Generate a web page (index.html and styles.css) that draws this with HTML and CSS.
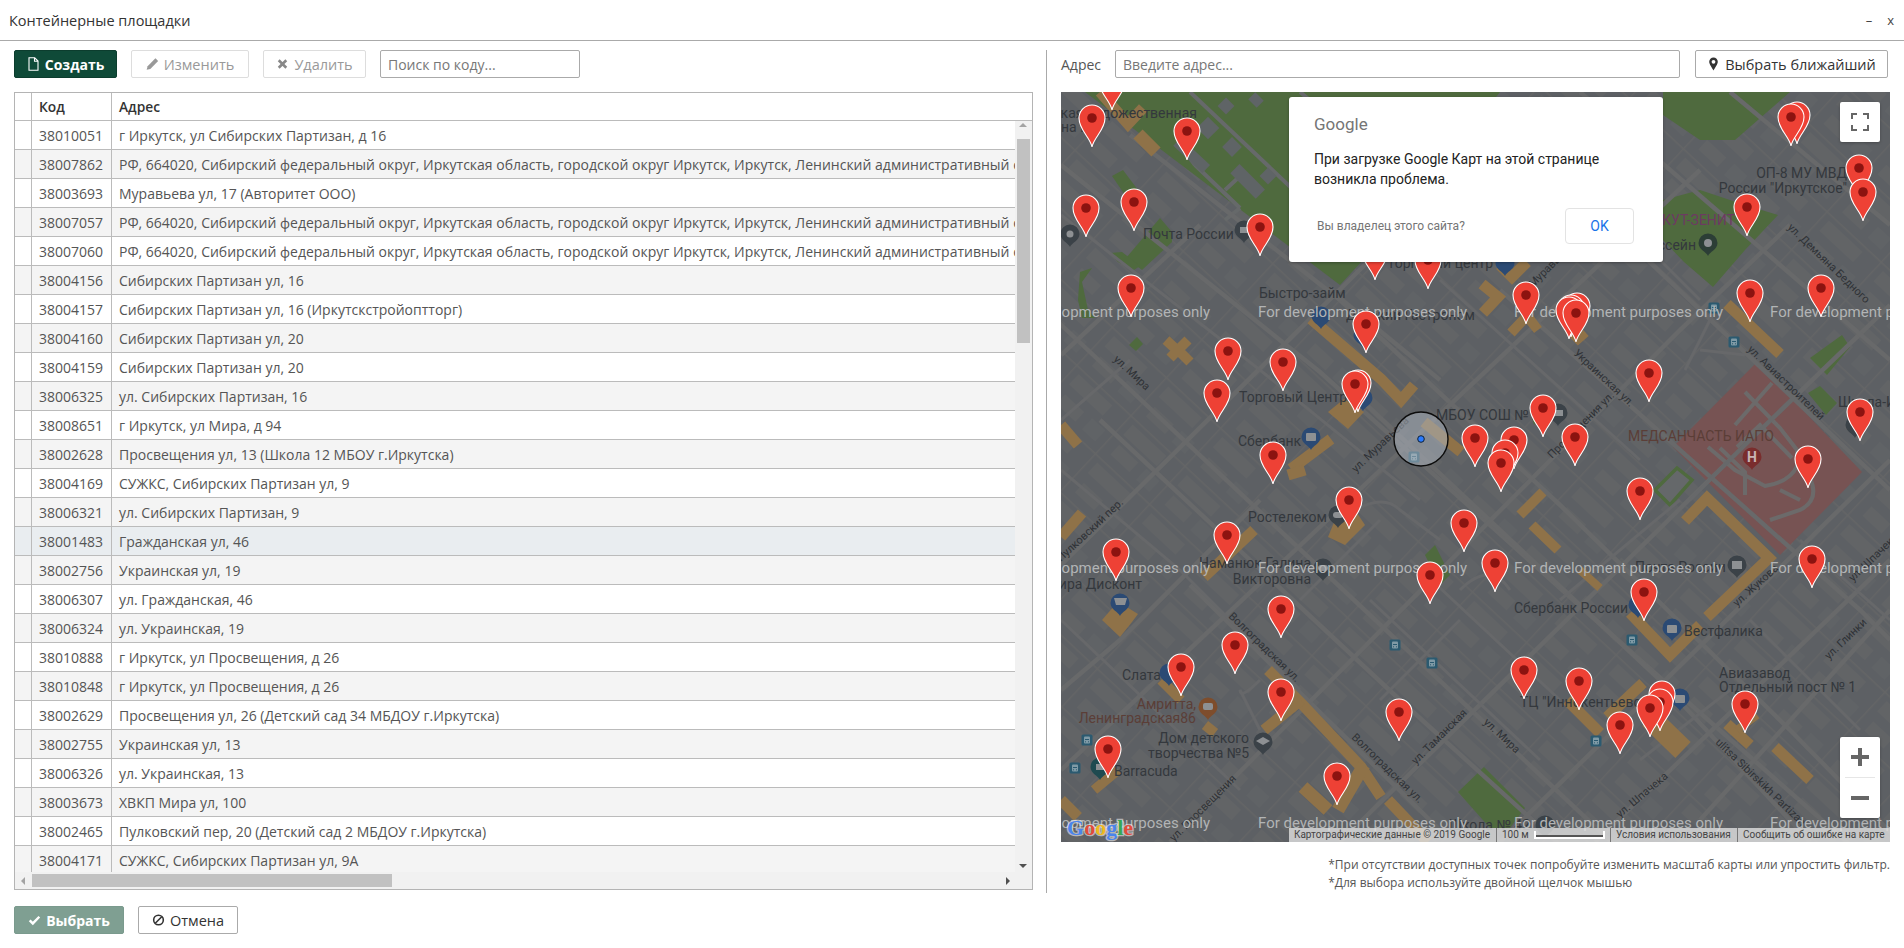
FILE: index.html
```html
<!DOCTYPE html>
<html lang="ru">
<head>
<meta charset="utf-8">
<title>Контейнерные площадки</title>
<link rel="stylesheet" href="styles.css">
</head>
<body>
<div class="window">
  <header class="titlebar">
    <span class="title">Контейнерные площадки</span>
    <span class="winctl"><span class="wmin">–</span><span class="wclose">x</span></span>
  </header>
  <div class="content">
    <section class="left">
      <div class="toolbar">
        <button class="btn btn-primary btn-create"><svg class="ico" viewBox="0 0 12 14"><path class="ico-line-w" d="M1.5.8h5.7l3.3 3.3v9.1h-9zM7 .8v3.5h3.5"/></svg>Создать</button>
        <button class="btn btn-disabled btn-edit"><svg class="ico" viewBox="0 0 12 12"><path class="ico-fill" d="M8.7.8l2.5 2.5-7.2 7.2-3.4.9.9-3.4z"/></svg>Изменить</button>
        <button class="btn btn-disabled btn-del"><svg class="ico" viewBox="0 0 12 12"><path class="ico-x" d="M2.5 2.5l7 7M9.5 2.5l-7 7"/></svg>Удалить</button>
        <input class="field search" placeholder="Поиск по коду...">
      </div>
      <div class="grid">
        <div class="row head"><div class="c0"></div><div class="c1">Код</div><div class="c2">Адрес</div></div>
        <div class="body">
          <div class="row"><div class="c0"></div><div class="c1">38010051</div><div class="c2">г Иркутск, ул Сибирских Партизан, д 16</div></div>
          <div class="row"><div class="c0"></div><div class="c1">38007862</div><div class="c2">РФ, 664020, Сибирский федеральный округ, Иркутская область, городской округ Иркутск, Иркутск, Ленинский административный округ</div></div>
          <div class="row"><div class="c0"></div><div class="c1">38003693</div><div class="c2">Муравьева ул, 17 (Авторитет ООО)</div></div>
          <div class="row"><div class="c0"></div><div class="c1">38007057</div><div class="c2">РФ, 664020, Сибирский федеральный округ, Иркутская область, городской округ Иркутск, Иркутск, Ленинский административный округ</div></div>
          <div class="row"><div class="c0"></div><div class="c1">38007060</div><div class="c2">РФ, 664020, Сибирский федеральный округ, Иркутская область, городской округ Иркутск, Иркутск, Ленинский административный округ</div></div>
          <div class="row"><div class="c0"></div><div class="c1">38004156</div><div class="c2">Сибирских Партизан ул, 16</div></div>
          <div class="row"><div class="c0"></div><div class="c1">38004157</div><div class="c2">Сибирских Партизан ул, 16 (Иркутскстройоптторг)</div></div>
          <div class="row"><div class="c0"></div><div class="c1">38004160</div><div class="c2">Сибирских Партизан ул, 20</div></div>
          <div class="row"><div class="c0"></div><div class="c1">38004159</div><div class="c2">Сибирских Партизан ул, 20</div></div>
          <div class="row"><div class="c0"></div><div class="c1">38006325</div><div class="c2">ул. Сибирских Партизан, 16</div></div>
          <div class="row"><div class="c0"></div><div class="c1">38008651</div><div class="c2">г Иркутск, ул Мира, д 94</div></div>
          <div class="row"><div class="c0"></div><div class="c1">38002628</div><div class="c2">Просвещения ул, 13 (Школа 12 МБОУ г.Иркутска)</div></div>
          <div class="row"><div class="c0"></div><div class="c1">38004169</div><div class="c2">СУЖКС, Сибирских Партизан ул, 9</div></div>
          <div class="row"><div class="c0"></div><div class="c1">38006321</div><div class="c2">ул. Сибирских Партизан, 9</div></div>
          <div class="row selected"><div class="c0"></div><div class="c1">38001483</div><div class="c2">Гражданская ул, 46</div></div>
          <div class="row"><div class="c0"></div><div class="c1">38002756</div><div class="c2">Украинская ул, 19</div></div>
          <div class="row"><div class="c0"></div><div class="c1">38006307</div><div class="c2">ул. Гражданская, 46</div></div>
          <div class="row"><div class="c0"></div><div class="c1">38006324</div><div class="c2">ул. Украинская, 19</div></div>
          <div class="row"><div class="c0"></div><div class="c1">38010888</div><div class="c2">г Иркутск, ул Просвещения, д 26</div></div>
          <div class="row"><div class="c0"></div><div class="c1">38010848</div><div class="c2">г Иркутск, ул Просвещения, д 26</div></div>
          <div class="row"><div class="c0"></div><div class="c1">38002629</div><div class="c2">Просвещения ул, 26 (Детский сад 34 МБДОУ г.Иркутска)</div></div>
          <div class="row"><div class="c0"></div><div class="c1">38002755</div><div class="c2">Украинская ул, 13</div></div>
          <div class="row"><div class="c0"></div><div class="c1">38006326</div><div class="c2">ул. Украинская, 13</div></div>
          <div class="row"><div class="c0"></div><div class="c1">38003673</div><div class="c2">ХВКП Мира ул, 100</div></div>
          <div class="row"><div class="c0"></div><div class="c1">38002465</div><div class="c2">Пулковский пер, 20 (Детский сад 2 МБДОУ г.Иркутска)</div></div>
          <div class="row"><div class="c0"></div><div class="c1">38004171</div><div class="c2">СУЖКС, Сибирских Партизан ул, 9А</div></div>
        </div>
        <div class="vscroll"><span class="arrow-up"></span><span class="vthumb"></span><span class="arrow-down"></span></div>
        <div class="hscroll"><span class="arrow-left"></span><span class="hthumb"></span><span class="arrow-right"></span></div>
      </div>
    </section>
    <section class="right">
      <div class="addressbar">
        <label class="addr-label">Адрес</label>
        <input class="field addr" placeholder="Введите адрес...">
        <button class="btn btn-outline btn-near"><svg class="ico" viewBox="0 0 10 14"><path class="ico-dark" fill-rule="evenodd" d="M5 .5a4.3 4.3 0 0 1 4.3 4.3C9.300 7.300 6.300 11 5 13.500 3.700 11 .7 7.300.7 4.800A4.300 4.300 0 0 1 5 .5zm0 2.400a1.900 1.900 0 1 0 0 3.800 1.900 1.900 0 0 0 0-3.800z"/></svg>Выбрать ближайший</button>
      </div>
      <div class="map">
        <svg class="mapsvg" viewBox="1061 92 829 750" xmlns="http://www.w3.org/2000/svg">
          <defs>
            <pattern id="blocks" width="74" height="52" patternUnits="userSpaceOnUse" patternTransform="rotate(43)">
              <rect class="p-bg" width="74" height="52"/>
              <rect class="p-block" x="8" y="6" width="46" height="14"/>
              <rect class="p-block" x="12" y="30" width="26" height="13"/>
              <rect class="p-block2" x="48" y="29" width="18" height="15"/>
              <path class="p-road" d="M0 .5H74M.5 0V52"/>
            </pattern>
            <g id="pin">
              <path class="pin-body" d="M0 29C-2 19-13 12-13 0A13 13 0 1 1 13 0C13 12 2 19 0 29Z"/>
              <circle class="pin-dot" r="4.800"/>
            </g>
            <path id="poi" d="M0 13C-1.500 9-9.500 6.500-9.500 0A9.500 9.500 0 1 1 9.500 0C9.500 6.500 1.500 9 0 13Z"/>
            <g id="bus">
              <rect class="bus-bg" x="-5.500" y="-5.500" width="11" height="11" rx="1.500"/>
              <rect class="bus-in" x="-3" y="-3.500" width="6" height="7" rx="1"/>
              <path class="bus-line" d="M-2-.5H2M-2 1.800H-1M1 1.800H2"/>
            </g>
          </defs>
          <rect class="base" x="1061" y="92" width="829" height="750"/>

          <!-- parks -->
          <path class="park" d="M1085 92L1340 285L1400 220L1500 92Z"/>
          <path class="park" d="M1112 176L1123 170L1138 190L1127 198Z"/>
          <path class="park" d="M1126 258L1160 218L1172 232L1172 242L1142 270Z"/>
          <path class="park" d="M1110 253L1122 252L1140 266L1134 270L1118 262Z"/>
          <path class="park" d="M1080 272L1092 268L1082 282L1088 310L1095 318L1082 318L1078 300Z"/>
          <path class="park" d="M1129 345L1137 337L1143 344L1136 351Z"/>
          <path class="park" d="M1663 92H1790L1735 140L1700 140L1663 115Z"/>
          <path class="park" d="M1663 200L1700 190L1745 205L1778 215L1745 250L1713 287L1684 262L1663 240Z"/>
          <path class="park" d="M1810 358L1842 335L1850 347L1827 375Z"/>
          <path class="park" d="M1808 393L1820 386L1837 403L1826 415Z"/>
          <path class="park" d="M1458 792L1484 767L1525 808L1510 828L1490 828Z"/>
          <path class="park" d="M1530 410L1540 400L1546 408L1534 425Z"/>
          <path class="park-out" d="M1677 468L1692 480L1670 505L1655 490Z"/>
          <path class="park" d="M1425 555L1435 545L1450 575L1440 585Z"/>

          <!-- hospital -->
          <path class="hosp" d="M1757 362L1862 472L1780 555L1673 447Z"/>
          <path class="hosp-road" d="M1745 392L1780 428L1797 450L1797 466Q1790 482 1765 486L1735 470L1708 447M1737 447L1760 425L1792 458M1810 478Q1820 500 1800 510L1770 520M1772 383L1735 425M1720 448L1745 472L1745 495M1780 490L1800 500"/>

          <!-- minor roads in parks -->
          <path class="minor-g" d="M1195 165L1240 208M1225 190L1238 178L1252 190M1240 208L1225 220M1180 145L1195 165M1300 92L1340 125M1190 92L1320 215"/>
          <rect class="block-g" x="1200" y="120" width="16" height="16" transform="rotate(45 1208 128)"/>
          <rect class="block-g" x="1225" y="140" width="14" height="14" transform="rotate(45 1232 147)"/>
          <rect class="block-g" x="1230" y="175" width="36" height="13" transform="rotate(45 1248 181)"/>
          <rect class="block-g" x="1262" y="170" width="12" height="12" transform="rotate(45 1268 176)"/>
          <rect class="block-g" x="1220" y="100" width="12" height="12" transform="rotate(45 1226 106)"/>
          <rect class="block-g" x="1250" y="95" width="12" height="10" transform="rotate(45 1256 100)"/>
          <rect class="block-g" x="1172" y="150" width="40" height="11" transform="rotate(43 1192 155)"/>

          <!-- main roads -->
          <g class="roads">
            <path d="M1040 305L1620 850"/>
            <path d="M1061 165L1320 372L1640 660L1890 880"/>
            <path d="M1130 135L1340 300L1560 505L1790 730L1900 842"/>
            <path d="M1190 585L1440 830"/>
            <path d="M1100 420L1400 700L1560 845"/>
            <path d="M1500 290L1860 610L1890 640"/>
            <path d="M1600 215L1890 490"/>
            <path d="M1340 380L1660 680L1810 842"/>
            <path d="M1330 290L1440 380"/>
            <path d="M1170 842L1680 330L1790 225"/>
            <path d="M1061 770L1700 170"/>
            <path d="M1061 565L1400 230"/>
            <path d="M1340 842L1750 440L1890 305"/>
            <path d="M1500 842L1890 460"/>
            <path d="M1595 842L1890 560"/>
            <path d="M1700 820L1890 610"/>
            <path d="M1061 355L1120 300L1200 225"/>
            <path d="M1061 690L1120 640L1260 500"/>
            <path d="M1580 92L1890 360"/>
            <path d="M1730 92L1890 225"/>
          </g>
          <g class="roads-thin">
            <path d="M1061 215L1260 370L1420 500M1061 470L1180 570L1300 690M1061 620L1240 790M1440 280L1640 460M1370 600L1540 760M1410 560L1560 700M1660 260L1700 300M1800 540L1890 620M1750 620L1860 730"/>
            <path d="M1340 520Q1380 490 1400 510L1440 540M1260 680Q1240 700 1240 690L1260 730M1460 590Q1490 560 1510 590M1640 760L1730 690M1560 600L1680 500M1590 420L1640 370M1380 700L1460 620M1720 300L1710 320Q1690 360 1685 370M1700 350L1745 355"/>
            <path d="M1061 420L1130 360M1390 100L1300 190M1730 460L1690 500M1300 600L1380 520"/>
          </g>

          <!-- buildings -->
          <g class="bld">
            <path d="M1100 92L1128 124L1143 108"/>
            <path d="M1138 134L1156 152" class="w14"/>
            <path d="M1166 340L1180 353M1188 340L1170 358M1178 350L1190 362" class="w10"/>
            <path d="M1311 319L1381 379L1401 400L1414 385"/>
            <path d="M1424 422L1461 452"/>
            <path d="M1291 469L1331 439"/>
            <path d="M1061 425L1078 445"/>
            <path d="M1500 265L1512 277L1527 262"/>
            <path d="M1482 284L1498 297L1483 313"/>
            <path d="M1511 333L1527 316L1538 330" class="w10"/>
            <path d="M1568 330L1578 340L1586 333" class="w8"/>
            <path d="M1727 304L1780 354"/>
            <path d="M1520 515L1543 492" class="w10"/>
            <path d="M1532 525L1558 550" class="w10"/>
            <path d="M1685 521L1707 498L1769 558L1707 617"/>
            <path d="M1580 570L1600 588" class="w8"/>
            <path d="M1630 613L1670 655L1700 625"/>
            <path d="M1567 700L1600 733"/>
            <path d="M1607 717L1643 683"/>
            <path d="M1650 718L1683 750" class="w20"/>
            <path d="M1727 724L1750 745"/>
            <path d="M1737 730L1757 715" class="w8"/>
            <path d="M1775 747L1810 780"/>
            <path d="M1061 537L1082 513"/>
            <path d="M1204 577L1254 530"/>
            <path d="M1288 475L1305 470"/>
            <path d="M1161 680L1181 700" class="w10"/>
            <path d="M1205 725L1215 733" class="w10"/>
            <path d="M1268 670L1301 703L1361 767L1381 797"/>
            <path d="M1264 730L1301 700"/>
            <path d="M1303 787L1328 810" class="w14"/>
            <path d="M1338 810L1364 765" class="w14"/>
            <path d="M1388 800L1428 842"/>
            <path d="M1094 790L1118 770" class="w10"/>
            <path d="M1061 800L1078 817"/>
            <path d="M1232 650L1242 640" class="w8"/>
          </g>
          <path class="bldf" d="M1328 412L1348 429L1364 412L1344 399Z"/>
          <path class="bldf" d="M1328 537L1345 545L1365 525L1355 510L1335 520Z"/>
          <path class="bldf" d="M1102 620L1120 637L1132 622L1138 614L1125 606L1115 605Z"/>

          <!-- poi pins -->
          <use href="#poi" class="poi-g" x="1070" y="234"/>
          <use href="#poi" class="poi-g" x="1244" y="230"/>
          <use href="#poi" class="poi-b" x="1321" y="316"/>
          <use href="#poi" class="poi-b" x="1505" y="263"/>
          <use href="#poi" class="poi-g" x="1338" y="515"/>
          <use href="#poi" class="poi-b" x="1311" y="437"/>
          <use href="#poi" class="poi-b" x="1363" y="335"/>
          <use href="#poi" class="poi-b" x="1363" y="398"/>
          <use href="#poi" class="poi-g" x="1558" y="413"/>
          <use href="#poi" class="poi-r" x="1752" y="457"/>
          <use href="#poi" class="poi-g" x="1323" y="568"/>
          <use href="#poi" class="poi-b" x="1120" y="603"/>
          <use href="#poi" class="poi-b" x="1169" y="673"/>
          <use href="#poi" class="poi-br" x="1208" y="707"/>
          <use href="#poi" class="poi-g" x="1263" y="742"/>
          <use href="#poi" class="poi-t" x="1100" y="767"/>
          <use href="#poi" class="poi-g" x="1737" y="565"/>
          <use href="#poi" class="poi-b" x="1672" y="628"/>
          <use href="#poi" class="poi-b" x="1680" y="698"/>
          <use href="#poi" class="poi-b" x="1638" y="605"/>
          <use href="#poi" class="poi-g" x="1545" y="825"/>
          <use href="#poi" class="poi-dg" x="1708" y="243"/>
          <use href="#poi" class="poi-g" x="1855" y="425"/>
          <circle class="poi-in" cx="1070" cy="234" r="3.500"/>
          <rect class="poi-in" x="1240" y="227" width="8" height="6"/>
          <rect class="poi-in" x="1306" y="433" width="10" height="8" rx="1"/>
          <rect class="poi-in" x="1333" y="512" width="10" height="6" rx="3"/>
          <rect class="poi-in" x="1553" y="410" width="10" height="6"/>
          <rect class="poi-in" x="1318" y="565" width="10" height="6" rx="3"/>
          <path class="poi-in" d="M1114 598H1127L1125 605H1116Z"/>
          <rect class="poi-in" x="1203" y="703" width="10" height="7" rx="2"/>
          <path class="poi-in" d="M1256 741L1263 737L1270 741L1263 745Z"/>
          <rect class="poi-in" x="1096" y="764" width="8" height="6"/>
          <rect class="poi-in" x="1732" y="561" width="10" height="8"/>
          <rect class="poi-in" x="1667" y="625" width="10" height="8" rx="1"/>
          <rect class="poi-in" x="1675" y="695" width="10" height="8" rx="1"/>
          <circle class="poi-in" cx="1708" cy="243" r="4"/>
          <text class="poi-h" x="1752" y="462">H</text>

          <!-- bus stops -->
          <use href="#bus" x="1087" y="740"/><use href="#bus" x="1075" y="768"/>
          <use href="#bus" x="1395" y="645"/><use href="#bus" x="1432" y="663"/>
          <use href="#bus" x="1632" y="640"/><use href="#bus" x="1596" y="741"/>
          <use href="#bus" x="1734" y="342"/><use href="#bus" x="1714" y="308"/>
          <use href="#bus" x="1414" y="457"/>

          <!-- labels -->
          <g class="lbl">
            <text x="1197" y="118" text-anchor="end">кая Художественная</text>
            <text x="1061" y="132">на М</text>
            <text x="1143" y="239">Почта России</text>
            <text x="1259" y="298">Быстро-займ</text>
            <text x="1387" y="268">Торговый центр</text>
            <text x="1346" y="320">Детский Гастроном</text>
            <text x="1239" y="402">Торговый Центр</text>
            <text x="1238" y="446">Сбербанк</text>
            <text x="1436" y="420">МБОУ СОШ №1</text>
            <text x="1838" y="407">Школа-Интернат</text>
            <text x="1847" y="178" text-anchor="end">ОП-8 МУ МВД</text>
            <text x="1847" y="193" text-anchor="end">России "Иркутское"</text>
            <text x="1696" y="250" text-anchor="end">Бассейн</text>
            <text x="1248" y="522">Ростелеком</text>
            <text x="1311" y="568" text-anchor="end">Наманюк Галина</text>
            <text x="1311" y="584" text-anchor="end">Викторовна</text>
            <text x="1142" y="589" text-anchor="end">Мира Дисконт</text>
            <text x="1122" y="680">Слата</text>
            <text x="1249" y="743" text-anchor="end">Дом детского</text>
            <text x="1249" y="758" text-anchor="end">творчества №5</text>
            <text x="1114" y="776">Barracuda</text>
            <text x="1530" y="830" text-anchor="end">Школа № 42</text>
            <text x="1635" y="572">Почта России</text>
            <text x="1514" y="613">Сбербанк России</text>
            <text x="1684" y="636">Вестфалика</text>
            <text x="1520" y="707">ТЦ "Иннокентьевский"</text>
            <text x="1719" y="678">Авиазавод</text>
            <text x="1719" y="692">Отдельный пост № 1</text>
          </g>
          <g class="lbl lbl-brown">
            <text x="1196" y="709" text-anchor="end">Амритта,</text>
            <text x="1196" y="723" text-anchor="end">Ленинградская86</text>
            <text x="1628" y="441">МЕДСАНЧАСТЬ ИАПО</text>
          </g>
          <text class="lbl lbl-purple" x="1735" y="225" text-anchor="end">ИРКУТ-ЗЕНИТ</text>
          <g class="street">
            <text transform="translate(1113 360) rotate(43)">ул. Мира</text>
            <text transform="translate(1483 723) rotate(43)">ул. Мира</text>
            <text transform="translate(1356 473) rotate(-44)">ул. Муравьева</text>
            <text transform="translate(1533 288) rotate(-45)">Муравьева</text>
            <text transform="translate(1061 562) rotate(-43)">Пулковский пер.</text>
            <text transform="translate(1174 842) rotate(-45)">ул. Просвещения</text>
            <text transform="translate(1552 459) rotate(-45)">Просвещения ул.</text>
            <text transform="translate(1573 354) rotate(43)">Украинская ул.</text>
            <text transform="translate(1747 350) rotate(44)">ул. Авиастроителей</text>
            <text transform="translate(1787 228) rotate(44)">ул. Демьяна Бедного</text>
            <text transform="translate(1228 617) rotate(44)">Волгоградская ул.</text>
            <text transform="translate(1351 738) rotate(44)">Волгоградская ул.</text>
            <text transform="translate(1416 765) rotate(-45)">ул. Таманская</text>
            <text transform="translate(1737 607) rotate(-42)">ул. Жукова</text>
            <text transform="translate(1620 818) rotate(-40)">ул. Шпачека</text>
            <text transform="translate(1829 660) rotate(-44)">ул. Глинки</text>
            <text transform="translate(1853 582) rotate(-44)">ул. Шпачека</text>
            <text transform="translate(1715 743) rotate(44)">ulitsa Sibirskikh Partizan</text>
          </g>

          <!-- development watermark -->
          <g class="wm">
            <text x="1001" y="317">For development purposes only</text>
            <text x="1258" y="317">For development purposes only</text>
            <text x="1514" y="317">For development purposes only</text>
            <text x="1770" y="317">For development purposes only</text>
            <text x="1001" y="573">For development purposes only</text>
            <text x="1258" y="573">For development purposes only</text>
            <text x="1514" y="573">For development purposes only</text>
            <text x="1770" y="573">For development purposes only</text>
            <text x="1001" y="828">For development purposes only</text>
            <text x="1258" y="828">For development purposes only</text>
            <text x="1514" y="828">For development purposes only</text>
            <text x="1770" y="828">For development purposes only</text>
          </g>

          <!-- location circle -->
          <circle class="loc" cx="1421" cy="439" r="27"/>
          <circle class="loc-dot" cx="1421" cy="439" r="3.300"/>

          <!-- markers -->
          <use href="#pin" x="1112" y="81"/>
          <use href="#pin" x="1092" y="118"/>
          <use href="#pin" x="1797" y="115"/>
          <use href="#pin" x="1791" y="117"/>
          <use href="#pin" x="1187" y="131"/>
          <use href="#pin" x="1859" y="168"/>
          <use href="#pin" x="1863" y="192"/>
          <use href="#pin" x="1134" y="202"/>
          <use href="#pin" x="1747" y="207"/>
          <use href="#pin" x="1086" y="208"/>
          <use href="#pin" x="1260" y="227"/>
          <use href="#pin" x="1375" y="251"/>
          <use href="#pin" x="1428" y="260"/>
          <use href="#pin" x="1131" y="288"/>
          <use href="#pin" x="1821" y="288"/>
          <use href="#pin" x="1750" y="293"/>
          <use href="#pin" x="1526" y="295"/>
          <use href="#pin" x="1577" y="306"/>
          <use href="#pin" x="1571" y="308"/>
          <use href="#pin" x="1569" y="310"/>
          <use href="#pin" x="1576" y="313"/>
          <use href="#pin" x="1366" y="324"/>
          <use href="#pin" x="1228" y="351"/>
          <use href="#pin" x="1283" y="362"/>
          <use href="#pin" x="1649" y="373"/>
          <use href="#pin" x="1358" y="383"/>
          <use href="#pin" x="1355" y="384"/>
          <use href="#pin" x="1217" y="393"/>
          <use href="#pin" x="1543" y="408"/>
          <use href="#pin" x="1860" y="412"/>
          <use href="#pin" x="1575" y="437"/>
          <use href="#pin" x="1475" y="438"/>
          <use href="#pin" x="1514" y="440"/>
          <use href="#pin" x="1505" y="453"/>
          <use href="#pin" x="1501" y="463"/>
          <use href="#pin" x="1273" y="455"/>
          <use href="#pin" x="1808" y="459"/>
          <use href="#pin" x="1640" y="491"/>
          <use href="#pin" x="1349" y="500"/>
          <use href="#pin" x="1464" y="523"/>
          <use href="#pin" x="1227" y="535"/>
          <use href="#pin" x="1116" y="552"/>
          <use href="#pin" x="1812" y="559"/>
          <use href="#pin" x="1495" y="563"/>
          <use href="#pin" x="1430" y="575"/>
          <use href="#pin" x="1644" y="592"/>
          <use href="#pin" x="1281" y="609"/>
          <use href="#pin" x="1235" y="645"/>
          <use href="#pin" x="1181" y="667"/>
          <use href="#pin" x="1524" y="670"/>
          <use href="#pin" x="1579" y="681"/>
          <use href="#pin" x="1281" y="692"/>
          <use href="#pin" x="1662" y="694"/>
          <use href="#pin" x="1660" y="702"/>
          <use href="#pin" x="1745" y="704"/>
          <use href="#pin" x="1650" y="708"/>
          <use href="#pin" x="1399" y="712"/>
          <use href="#pin" x="1620" y="725"/>
          <use href="#pin" x="1108" y="749"/>
          <use href="#pin" x="1337" y="776"/>

          <text class="glogo" x="1067" y="835"><tspan class="g-b">G</tspan><tspan class="g-r">o</tspan><tspan class="g-y">o</tspan><tspan class="g-b">g</tspan><tspan class="g-g">l</tspan><tspan class="g-r">e</tspan></text>
        </svg>

        <div class="dialog">
          <div class="dlg-logo">Google</div>
          <p class="dlg-msg">При загрузке Google Карт на этой странице возникла проблема.</p>
          <div class="dlg-foot">
            <span class="dlg-owner">Вы владелец этого сайта?</span>
            <button class="dlg-ok">OK</button>
          </div>
        </div>

        <button class="ctl ctl-full"><svg class="ctl-ico" viewBox="0 0 18 18"><path class="ctl-line" d="M1 6V1H6M12 1H17V6M17 12V17H12M6 17H1V12"/></svg></button>
        <div class="ctl ctl-zoom">
          <span class="zoom-btn"><svg class="zoom-ico" viewBox="0 0 18 18"><path class="zoom-line" d="M0 9H18M9 0V18"/></svg></span>
          <span class="zoom-sep"></span>
          <span class="zoom-btn"><svg class="zoom-ico" viewBox="0 0 18 18"><path class="zoom-line" d="M0 9H18"/></svg></span>
        </div>

        <div class="attr">
          <span class="attr-cell attr-data">Картографические данные © 2019 Google</span>
          <span class="attr-cell attr-scale">100 м<span class="scalebar"></span></span>
          <span class="attr-cell attr-terms">Условия использования</span>
          <span class="attr-cell attr-report">Сообщить об ошибке на карте</span>
        </div>
      </div>
      <div class="notes">
        <div class="notes-in">
          <div>*При отсутствии доступных точек попробуйте изменить масштаб карты или упростить фильтр.</div>
          <div>*Для выбора используйте двойной щелчок мышью</div>
        </div>
      </div>
    </section>
  </div>
  <footer class="footer">
    <button class="btn btn-ok"><svg class="ico" viewBox="0 0 14 12"><path class="ico-check" d="M1.800 6.300l3.400 3.400 7-7.200"/></svg>Выбрать</button>
    <button class="btn btn-outline btn-cancel"><svg class="ico" viewBox="0 0 14 14"><circle class="ico-ban" cx="7" cy="7" r="5.200"/><path class="ico-ban" d="M3.500 10.500l7-7"/></svg>Отмена</button>
  </footer>
</div>
</body>
</html>
```
FILE: styles.css
```css
* { box-sizing: border-box; }
html, body { margin: 0; padding: 0; height: 100%; background: #fff; }
body { font-family: "Open Sans", "Noto Sans", sans-serif; font-size: 14px; color: #555; overflow: hidden; }
.window { width: 1904px; height: 948px; display: flex; flex-direction: column; }

.titlebar { height: 41px; flex: none; display: flex; align-items: center; justify-content: space-between; padding: 0 9px; border-bottom: 1px solid #aaa; }
.title { color: #333; font-size: 14.500px; }
.winctl { display: flex; gap: 15px; color: #444; font-size: 13px; align-items: center; padding-right: 1px; }
.wmin { line-height: 1; }
.wclose { line-height: 1; }

.content { flex: none; height: 852px; display: flex; }
.left { width: 1047px; flex: none; padding: 0 14px; margin-top: 9px; border-right: 1px solid #aaa; height: 843px; }
.right { flex: 1; padding: 9px 14px 0 14px; min-width: 0; }

.toolbar { display: flex; height: 28px; align-items: stretch; }
.btn { font-family: inherit; font-size: 14.500px; height: 28px; border-radius: 2px; display: inline-flex; align-items: center; justify-content: center; gap: 5px; padding: 0; cursor: pointer; border: 1px solid transparent; }
.btn-primary { background: #0f4a38; border-color: #0c3d2e; color: #fff; font-weight: 700; font-size: 14px; }
.btn-create { width: 103px; }
.btn-disabled { background: #fff; border-color: #ddd; color: #999; }
.btn-edit { width: 118px; margin-left: 14px; }
.btn-del { width: 103px; margin-left: 14px; }
.btn-outline { background: #fff; border-color: #aaa; color: #333; }
.field { font-family: inherit; font-size: 14px; height: 28px; border: 1px solid #aaa; border-radius: 2px; padding: 0 7px; color: #555; background: #fff; outline: none; }
.field::placeholder { color: #777; opacity: 1; }
.search { width: 200px; margin-left: 14px; }

.ico { width: 13px; height: 14px; flex: none; }
.ico-line-w { fill: none; stroke: #fff; stroke-width: 1.100; }
.ico-fill { fill: #999; }
.ico-x { fill: none; stroke: #888; stroke-width: 2.400; }
.ico-dark { fill: #333; }
.ico-check { fill: none; stroke: #fff; stroke-width: 2.600; }
.ico-ban { fill: none; stroke: #333; stroke-width: 1.700; }

.grid { position: relative; margin-top: 14px; width: 1019px; height: 798px; border: 1px solid #b4b4b4; overflow: hidden; }
.row { display: flex; height: 29px; align-items: stretch; border-bottom: 1px solid #bbb; background: #fff; white-space: nowrap; }
.row.head { height: 28px; color: #333; font-weight: 600; font-size: 13.800px; background: #fff; }
.body { height: 751px; width: 1000px; overflow: hidden; }
.body .row:nth-child(even) { background: #f4f4f4; }
.body .row.selected { background: #e9edf0; }
.c0 { width: 17px; flex: none; border-right: 1px solid #bbb; }
.c1 { width: 80px; flex: none; border-right: 1px solid #bbb; padding: 0 7px; display: flex; align-items: center; }
.c2 { flex: 1; min-width: 0; padding: 0 7px; display: flex; align-items: center; overflow: hidden; }

.vscroll { position: absolute; right: 0; top: 28px; bottom: 17px; width: 17px; background: #f1f1f1; }
.vthumb { position: absolute; left: 2px; right: 2px; top: 18px; height: 204px; background: #c1c1c1; }
.arrow-up, .arrow-down, .arrow-left, .arrow-right { position: absolute; width: 0; height: 0; border: 4px solid transparent; }
.arrow-up { left: 4px; top: 2px; border-bottom-color: #a3a3a3; border-top-width: 0; }
.arrow-down { left: 4px; bottom: 4px; border-top-color: #505050; border-bottom-width: 0; }
.hscroll { position: absolute; left: 0; right: 0; bottom: 0; height: 17px; background: #f1f1f1; }
.hthumb { position: absolute; left: 17px; width: 360px; top: 2px; height: 13px; background: #c1c1c1; }
.arrow-left { left: 6px; top: 5px; border-right-color: #a3a3a3; border-left-width: 0; }
.arrow-right { right: 22px; top: 5px; border-left-color: #505050; border-right-width: 0; }

.addressbar { display: flex; height: 28px; align-items: center; }
.addr-label { width: 54px; flex: none; color: #555; font-size: 14px; }
.addr { width: 565px; flex: none; }
.btn-near { width: 193px; margin-left: 15px; flex: none; }

.map { position: relative; margin-top: 14px; width: 829px; height: 750px; overflow: hidden; background: #5e6165; }
.mapsvg { display: block; width: 829px; height: 750px; }

.base { fill: url(#blocks); }
.p-bg { fill: #5d6064; }
.p-block { fill: #626466; }
.p-block2 { fill: #606366; }
.p-road { stroke: #646566; stroke-width: 1.800; fill: none; }
.park { fill: #4f6a3e; }
.park-out { fill: #65686a; stroke: #4f6a3e; stroke-width: 3.500; }
.hosp { fill: #775353; }
.hosp-road { fill: none; stroke: #6c6a6a; stroke-width: 4; }
.minor-g { fill: none; stroke: #66696a; stroke-width: 4; }
.block-g { fill: #5f6466; }
.roads path { fill: none; stroke: #68696a; stroke-width: 4.500; }
.roads-thin path { fill: none; stroke: #67686a; stroke-width: 3; }
.bld path { fill: none; stroke: #8f7248; stroke-width: 11; }
.bld path.w8 { stroke-width: 8; }
.bld path.w10 { stroke-width: 10; }
.bld path.w14 { stroke-width: 13; }
.bld path.w20 { stroke-width: 22; }
.bldf { fill: #8f7248; }

.poi-g { fill: #3b4248; }
.poi-dg { fill: #2c3e36; }
.poi-b { fill: #2b4a74; }
.poi-t { fill: #1f4a50; }
.poi-r { fill: #7a2d2d; }
.poi-br { fill: #7e4d2c; }
.poi-in { fill: #8d9093; }
.poi-h { font: 700 14px Roboto, sans-serif; fill: #c9b3b3; text-anchor: middle; }
.bus-bg { fill: #2b5a70; }
.bus-in { fill: #7f9aa6; }
.bus-line { stroke: #2b5a70; stroke-width: 1; fill: none; }

.lbl { font: 14px Roboto, sans-serif; fill: #34383d; }
.lbl-brown { fill: #5b3e37; }
.lbl-purple { fill: #6d3a62; }
.street { font: 11px Roboto, sans-serif; fill: #2f3236; }
.wm { font: 15px Roboto, sans-serif; fill: #b2b4b5; }

.loc { fill: rgba(178, 186, 196, 0.5); stroke: #0c0c0c; stroke-width: 1.400; }
.loc-dot { fill: #2a7bff; stroke: #123; stroke-width: 1; }
.pin-body { fill: #ee4135; stroke: #fff; stroke-width: 1.100; }
.pin-dot { fill: #8c1310; }

.glogo { font: 700 22px "Liberation Serif", serif; stroke: #fff; stroke-width: 2.500; stroke-opacity: .55; paint-order: stroke; }
.g-b { fill: #4a84ec; }
.g-r { fill: #e14b3b; }
.g-y { fill: #efb820; }
.g-g { fill: #35a853; }

.dialog { position: absolute; left: 228px; top: 5px; width: 374px; height: 165px; background: #fff; border-radius: 3px; padding: 16px 25px 0; font-family: Roboto, sans-serif; box-shadow: 0 1px 3px rgba(0,0,0,.3); }
.dlg-logo { font-size: 17px; line-height: 22px; color: #757575; }
.dlg-msg { margin: 14px 0 0; font-size: 14px; line-height: 20px; color: #222; width: 300px; }
.dlg-foot { display: flex; align-items: center; justify-content: space-between; margin-top: 19px; padding-left: 3px; margin-right: 4px; }
.dlg-owner { font-size: 12px; color: #757575; }
.dlg-ok { width: 69px; height: 36px; background: #fff; border: 1px solid #e3e3e3; border-radius: 4px; color: #1a73e8; font: 14px Roboto, sans-serif; }

.ctl { position: absolute; background: #fff; border: 0; padding: 0; border-radius: 2px; box-shadow: 0 1px 3px rgba(0,0,0,.25); }
.ctl-full { right: 10px; top: 10px; width: 40px; height: 40px; display: flex; align-items: center; justify-content: center; }
.ctl-ico { width: 18px; height: 18px; }
.ctl-line { fill: none; stroke: #666; stroke-width: 2; }
.ctl-zoom { right: 10px; top: 645px; width: 40px; height: 81px; display: flex; flex-direction: column; align-items: center; }
.zoom-btn { height: 40px; width: 40px; display: flex; align-items: center; justify-content: center; }
.zoom-sep { height: 1px; width: 30px; background: #e6e6e6; flex: none; }
.zoom-ico { width: 18px; height: 18px; }
.zoom-line { stroke: #666; stroke-width: 4; fill: none; }

.attr { position: absolute; right: 0; bottom: 0; height: 14px; display: flex; font: 10px/14px Roboto, sans-serif; color: #444; background: rgba(225, 225, 225, .8); white-space: nowrap; }
.attr-cell { display: flex; align-items: center; padding: 0 5px; border-left: 1px solid #777; flex: none; justify-content: flex-start; }
.attr-data { width: 207px; border-left: 0; }
.attr-scale { width: 114px; }
.attr-terms { width: 127px; }
.attr-report { width: 153px; }
.scalebar { display: inline-block; width: 72px; height: 8px; margin-left: 5px; border: 2px solid #fff; border-top: 0; box-shadow: inset 0 -2px 0 #555; }

.notes { display: flex; justify-content: flex-end; margin-top: 14px; font-size: 12px; line-height: 18px; color: #555; }
.footer { flex: 1; display: flex; padding: 13px 14px 0; gap: 14px; }
.btn-ok { width: 110px; background: #7f9f92; border-color: #7a9a8d; color: #fff; font-weight: 700; font-size: 14px; }
.btn-cancel { width: 100px; }
```
